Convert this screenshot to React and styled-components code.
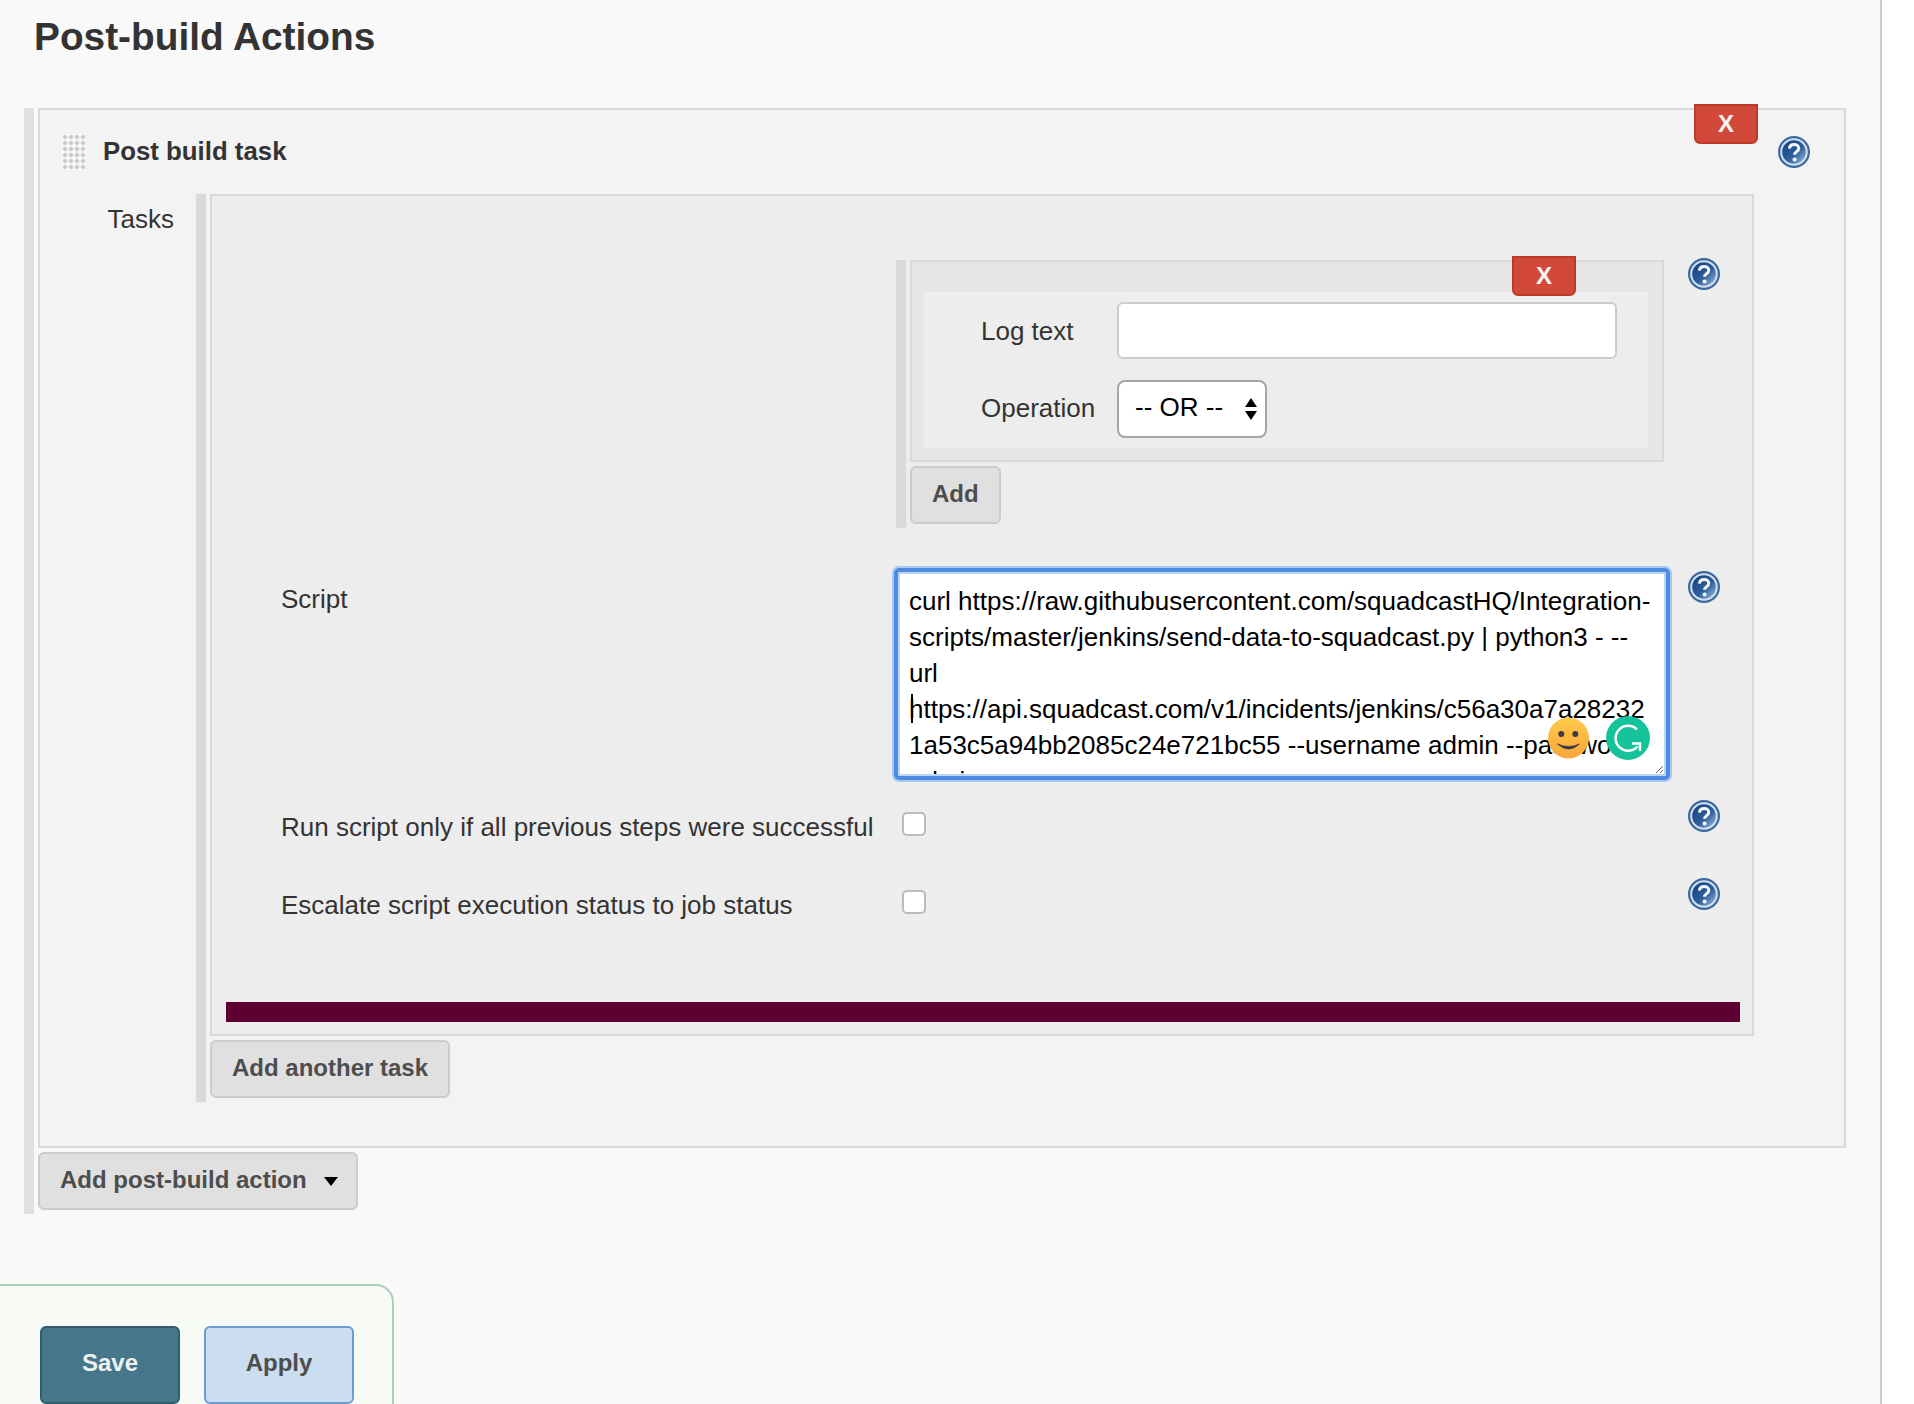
import React from "react";
import styled, { createGlobalStyle } from "styled-components";

const Global = createGlobalStyle`
  html, body { margin: 0; padding: 0; background: #fff; }
  body { font-family: "Liberation Sans", Arial, sans-serif; color: #333; }
  * { box-sizing: border-box; }
`;

const Page = styled.div`
  width: 1882px;
  height: 1404px;
  overflow: hidden;
  background: #f9f9f9;
  border-right: 2px solid #ccc;
`;
const Title = styled.h1`
  margin: 0;
  padding: 15px 0 0 34px;
  font-size: 38.8px;
  line-height: 44px;
  font-weight: 700;
  color: #333;
`;
const Repeated = styled.div`
  border-left: 10px solid ${(p) => p.$bar};
  padding-left: 4px;
  padding-bottom: 4px;
`;
const Section = styled(Repeated)`
  margin: 49px 34px 0 24px;
`;
const ActionBox = styled.div`
  position: relative;
  border: 2px solid #d9d9d9;
  background: #f3f3f3;
  padding: 24px 34px 44px 22px;
`;
const Header = styled.div`
  display: flex;
  align-items: flex-start;
  margin-bottom: 24px;
`;
const Handle = styled.div`
  width: 24px;
  height: 36px;
  background-color: #fbfbfb;
  background-image: radial-gradient(circle at 3px 3px, #bdbdbd 0, #cfcfcf 1.4px, #f4f4f4 2.8px, transparent 3px);
  background-size: 6px 6px;
`;
const ActionTitle = styled.div`
  margin-left: 17px;
  font-size: 25.8px;
  line-height: 30px;
  font-weight: 700;
  color: #333;
  flex: 1;
  padding-top: 2px;
`;
const HelpIconBox = styled.svg`
  display: block;
  width: 32px;
  height: 32px;
  margin-top: ${(p) => p.$top || 0}px;
  flex: none;
`;
const DeleteButton = styled.button`
  position: absolute;
  top: -6px;
  right: 86px;
  width: 64px;
  height: 40px;
  padding: 0;
  background: #d24939;
  border: 2px solid #bd3a2b;
  border-radius: 0 0 6px 6px;
  color: #f4f4f4;
  font: 700 24px/1 "Liberation Sans", Arial, sans-serif;
`;
const TasksRow = styled.div`
  display: flex;
  align-items: flex-start;
  margin-right: 56px;
`;
const TasksLabel = styled.div`
  width: 134px;
  padding: 10px 22px 0 0;
  text-align: right;
  font-size: 26px;
  line-height: 30px;
`;
const TasksList = styled(Repeated)`
  flex: 1;
`;
const TaskBox = styled.div`
  border: 2px solid #d9d9d9;
  background: #ededed;
  padding: 62px 12px 12px 14px;
`;
const Row = styled.div`
  display: grid;
  grid-template-columns: 595px 772px 32px;
  column-gap: 20px;
  margin: ${(p) => p.$top || 0}px 0 0 -14px;
  padding-left: 69px;
  align-items: start;
`;
const FieldLabel = styled.div`
  padding-top: ${(p) => p.$top}px;
  font-size: 26px;
  line-height: 30px;
  color: #333;
  white-space: nowrap;
`;
const SubList = styled(Repeated)`
  margin: 2px 4px 0 0;
`;
const SubBox = styled.div`
  position: relative;
  border: 2px solid #d9d9d9;
  background: #e6e6e6;
  padding: 30px 14px 12px 12px;
`;
const SubRows = styled.div`
  display: grid;
  grid-template-columns: 136px 500px;
  row-gap: 21px;
  align-items: center;
  background: #ededed;
  padding: 10px 0 10px 57px;
`;
const SubLabel = styled.label`
  padding-bottom: ${(p) => p.$lift || 0}px;
  font-size: 26px;
  line-height: 30px;
  color: #333;
`;
const TextInput = styled.input`
  display: block;
  width: 500px;
  height: 57px;
  background: #fff;
  border: 2px solid #ccc;
  border-radius: 6px;
`;
const SelectBox = styled.div`
  display: flex;
  align-items: center;
  justify-content: space-between;
  width: 150px;
  height: 58px;
  padding: 0 8px 0 16px;
  background: #fff;
  border: 2px solid #a6a6a6;
  border-radius: 8px;
  font-size: 26px;
  color: #000;
`;
const SelectText = styled.span`
  padding-bottom: 4px;
`;
const SelectArrows = styled.svg`
  width: 12px;
  height: 22px;
`;
const Button = styled.button`
  display: flex;
  align-items: center;
  width: fit-content;
  height: 58px;
  margin-top: 4px;
  padding: 0 20px 3px;
  background: #e0e0e0;
  border: 2px solid #ccc;
  border-radius: 6px;
  color: #4d4d4d;
  font: 700 24px/1 "Liberation Sans", Arial, sans-serif;
`;
const DropButton = styled(Button)`
  width: 320px;
  padding-left: 20px;
  justify-content: space-between;
  padding-right: 18px;
`;
const Caret = styled.svg`
  width: 14px;
  height: 10px;
  margin-top: 3px;
`;
const ScriptField = styled.div`
  position: relative;
  margin-left: -2px;
  width: 776px;
  height: 212px;
  border: 4px solid #4e8ce3;
  border-radius: 5px;
  box-shadow: 0 0 0 2px #a9c8f1, inset 0 0 0 2px #bcd5f7;
  padding: 2px;
`;
const ScriptArea = styled.textarea`
  display: block;
  width: 764px;
  height: 200px;
  margin: 0;
  padding: 9px 9px 0;
  border: 0;
  outline: 0;
  background: #fff;
  color: #000;
  font: 400 26px/36px "Liberation Sans", Arial, sans-serif;
  white-space: pre;
  overflow: hidden;
  resize: both;
`;
const TextCaret = styled.div`
  position: absolute;
  left: 13px;
  top: 122px;
  width: 2px;
  height: 29px;
  background: #000;
`;
const Emoji = styled.svg`
  position: absolute;
  left: 650px;
  top: 145px;
  width: 41px;
  height: 42px;
`;
const Grammarly = styled.svg`
  position: absolute;
  left: 708px;
  top: 144px;
  width: 44px;
  height: 44px;
`;
const Check = styled.input`
  appearance: none;
  display: block;
  width: 24px;
  height: 24px;
  margin: 12px 0 0 6px;
  background: #fff;
  border: 2px solid #bbb;
  border-radius: 5px;
`;
const Divider = styled.div`
  height: 20px;
  margin-top: 82px;
  background: #5e0032;
`;
const Footer = styled.div`
  display: flex;
  gap: 24px;
  width: 394px;
  height: 130px;
  margin-top: 70px;
  padding: 40px 0 0 40px;
  background: #f7faf5;
  border-top: 2px solid #a9d0bb;
  border-right: 2px solid #a9d0bb;
  border-top-right-radius: 18px;
`;
const SaveButton = styled.button`
  width: ${(p) => p.$w}px;
  height: 78px;
  padding: 0 0 4px;
  background: ${(p) => p.$bg};
  border: 2px solid ${(p) => p.$line};
  border-radius: 6px;
  color: ${(p) => p.$fg};
  font: 700 24px/1 "Liberation Sans", Arial, sans-serif;
`;

let helpId = 0;
function Help({ top }) {
  const id = `help${helpId++}`;
  return (
    <HelpIconBox $top={top} viewBox="0 0 32 32" aria-label="Help">
      <defs>
        <linearGradient id={id} x1="0.15" y1="0.1" x2="0.9" y2="0.9">
          <stop offset="0" stopColor="#17457f" />
          <stop offset="0.55" stopColor="#2c5e9d" />
          <stop offset="1" stopColor="#8fb0d6" />
        </linearGradient>
      </defs>
      <circle cx="16" cy="16" r="16" fill="#3a689f" />
      <circle cx="16" cy="16" r="12.800" fill={`url(#${id})`} stroke="#d5e0ee" strokeWidth="2" />
      <path d="M11.400 12.600c.3-2.600 2.300-4.100 4.800-4.100 2.700 0 4.600 1.600 4.600 3.800 0 3.300-4.200 3.400-4.200 6.400" fill="none" stroke="#f5f7fa" strokeWidth="3" />
      <circle cx="16.600" cy="23.400" r="2" fill="#f5f7fa" />
    </HelpIconBox>
  );
}

const scriptText = [
  "curl https://raw.githubusercontent.com/squadcastHQ/Integration-",
  "scripts/master/jenkins/send-data-to-squadcast.py | python3 - --",
  "url",
  "https://api.squadcast.com/v1/incidents/jenkins/c56a30a7a28232",
  "1a53c5a94bb2085c24e721bc55 --username admin --password",
  "admin",
].join("\n");

export default function App() {
  return (
    <Page>
      <Global />
      <Title>Post-build Actions</Title>
      <Section $bar="#e0e0e0">
        <ActionBox>
          <DeleteButton>X</DeleteButton>
          <Header>
            <Handle />
            <ActionTitle>Post build task</ActionTitle>
            <Help top={2} />
          </Header>
          <TasksRow>
            <TasksLabel>Tasks</TasksLabel>
            <TasksList $bar="#d9d9d9">
              <TaskBox>
                <Row>
                  <div />
                  <SubList $bar="#d9d9d9">
                    <SubBox>
                      <DeleteButton>X</DeleteButton>
                      <SubRows>
                        <SubLabel>Log text</SubLabel>
                        <TextInput type="text" />
                        <SubLabel $lift={2}>Operation</SubLabel>
                        <SelectBox>
                          <SelectText>-- OR --</SelectText>
                          <SelectArrows viewBox="0 0 12 22">
                            <path d="M6 0l6 9H0zM0 13h12l-6 9z" fill="#000" />
                          </SelectArrows>
                        </SelectBox>
                      </SubRows>
                    </SubBox>
                    <Button>Add</Button>
                  </SubList>
                  <Help />
                </Row>
                <Row $top={40}>
                  <FieldLabel $top={16}>Script</FieldLabel>
                  <ScriptField>
                    <ScriptArea readOnly spellCheck={false} defaultValue={scriptText} />
                    <TextCaret />
                    <Emoji viewBox="0 0 41 42">
                      <defs>
                        <linearGradient id="emojiFill" x1="0" y1="0" x2="0" y2="1">
                          <stop offset="0" stopColor="#ffcb4c" />
                          <stop offset="1" stopColor="#fba63a" />
                        </linearGradient>
                      </defs>
                      <circle cx="20.500" cy="21" r="20.500" fill="url(#emojiFill)" />
                      <circle cx="13.300" cy="17" r="3" fill="#3b3b47" />
                      <circle cx="27.300" cy="17" r="3" fill="#3b3b47" />
                      <path d="M9.500 27Q20.500 37 31.500 27Q20.500 32 9.500 27Z" fill="#3b3b47" stroke="#3b3b47" strokeWidth="0.800" />
                    </Emoji>
                    <Grammarly viewBox="0 0 44 44">
                      <circle cx="22" cy="22" r="22" fill="#15c39a" />
                      <path d="M31 13.500A12.500 12.500 0 1 0 31.500 30.500M26 27.500H34V35" fill="none" stroke="#fff" strokeWidth="2.400" />
                    </Grammarly>
                  </ScriptField>
                  <Help top={3} />
                </Row>
                <Row $top={20}>
                  <FieldLabel $top={12}>Run script only if all previous steps were successful</FieldLabel>
                  <Check type="checkbox" />
                  <Help />
                </Row>
                <Row $top={36}>
                  <FieldLabel $top={12}>Escalate script execution status to job status</FieldLabel>
                  <Check type="checkbox" />
                  <Help />
                </Row>
                <Divider />
              </TaskBox>
              <Button>Add another task</Button>
            </TasksList>
          </TasksRow>
        </ActionBox>
        <DropButton>
          Add post-build action
          <Caret viewBox="0 0 14 10">
            <path d="M0 1h14L7 10z" fill="#000" />
          </Caret>
        </DropButton>
      </Section>
      <Footer>
        <SaveButton $w={140} $bg="#457689" $line="#335c6d" $fg="#f0f0f0">Save</SaveButton>
        <SaveButton $w={150} $bg="#cbddee" $line="#6a9ed3" $fg="#4d4d4d">Apply</SaveButton>
      </Footer>
    </Page>
  );
}
